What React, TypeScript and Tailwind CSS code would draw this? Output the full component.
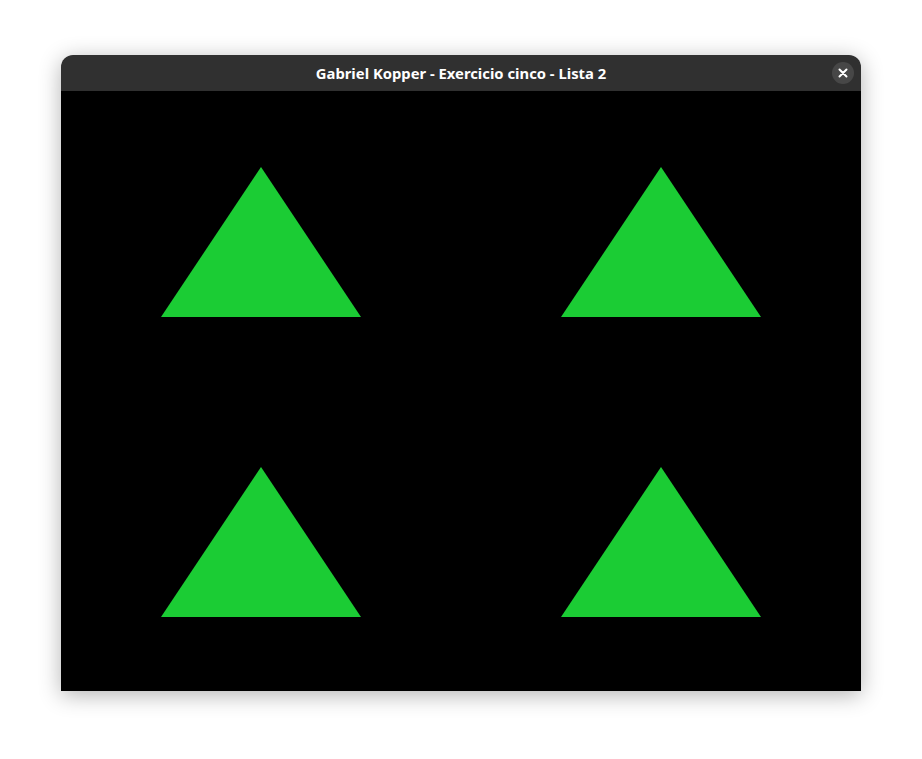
export default function App() {
  const quads = [0, 1, 2, 3];

  return (
    <div className="w-[922px] h-[759px] bg-white pt-[55px] pl-[61px]">
      <div className="w-[800px] rounded-t-[12px] shadow-[0_4px_22px_rgba(0,0,0,0.3)] overflow-hidden">
        <div className="relative h-[36px] bg-[#303030] flex items-center justify-center">
          <span className="text-white font-bold text-[14.8px] font-['Noto_Sans',sans-serif]">
            Gabriel Kopper - Exercicio cinco - Lista 2
          </span>
          <div className="absolute right-[7px] top-[7px] w-[22px] h-[22px] rounded-full bg-[#474747] flex items-center justify-center">
            <svg width="10" height="10" viewBox="0 0 10 10">
              <path d="M1.5 1.5 L8.5 8.5 M8.5 1.5 L1.5 8.5" stroke="white" strokeWidth="2" strokeLinecap="round" />
            </svg>
          </div>
        </div>
        <div className="grid grid-cols-2 w-[800px] h-[600px] bg-black">
          {quads.map((q) => (
            <svg key={q} width="400" height="300" viewBox="0 0 400 300" className="block">
              <polygon points="100,226 300,226 200,76" fill="#1bcc34" />
            </svg>
          ))}
        </div>
      </div>
    </div>
  );
}
